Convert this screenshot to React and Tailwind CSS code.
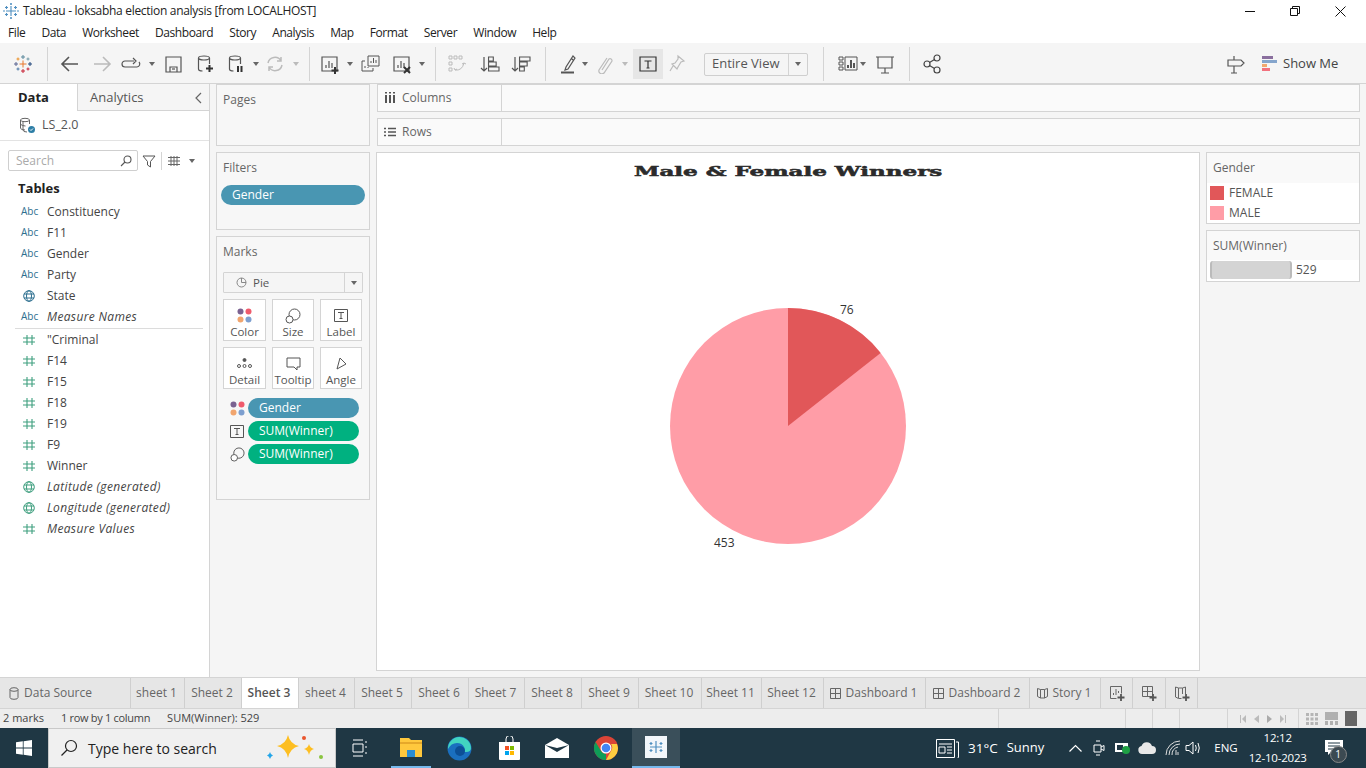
import React from "react";

const menus = ["File", "Data", "Worksheet", "Dashboard", "Story", "Analysis", "Map", "Format", "Server", "Window", "Help"];

const dims = [
  { name: "Constituency", kind: "abc" },
  { name: "F11", kind: "abc" },
  { name: "Gender", kind: "abc" },
  { name: "Party", kind: "abc" },
  { name: "State", kind: "globe" },
  { name: "Measure Names", kind: "abc", italic: true },
];

const measures = [
  { name: '"Criminal', kind: "num" },
  { name: "F14", kind: "num" },
  { name: "F15", kind: "num" },
  { name: "F18", kind: "num" },
  { name: "F19", kind: "num" },
  { name: "F9", kind: "num" },
  { name: "Winner", kind: "num" },
  { name: "Latitude (generated)", kind: "globeGreen", italic: true },
  { name: "Longitude (generated)", kind: "globeGreen", italic: true },
  { name: "Measure Values", kind: "num", italic: true },
];

// widths come from the tab separators in the picture
const tabs = [
  { label: "sheet 1", w: "w-[54px]" },
  { label: "Sheet 2", w: "w-[57px]" },
  { label: "Sheet 3", w: "w-[57px]", active: true },
  { label: "sheet 4", w: "w-[56px]" },
  { label: "Sheet 5", w: "w-[57px]" },
  { label: "Sheet 6", w: "w-[57px]" },
  { label: "Sheet 7", w: "w-[56px]" },
  { label: "Sheet 8", w: "w-[57px]" },
  { label: "Sheet 9", w: "w-[57px]" },
  { label: "Sheet 10", w: "w-[63px]" },
  { label: "Sheet 11", w: "w-[60px]" },
  { label: "Sheet 12", w: "w-[62px]" },
];

function Caret({ className = "", color = "#666" }) {
  return (
    <svg width="6" height="4" viewBox="0 0 6 4" className={"shrink-0 " + className}>
      <path d="M0 0h6L3 4z" fill={color} />
    </svg>
  );
}

function Sep({ className = "" }) {
  return <div className={"w-px h-[34px] bg-[#d4d4d4] shrink-0 " + className} />;
}

function Ico({ children, className = "", stroke = "#555", w = 20, h = 20, sw = 1.2 }) {
  return (
    <svg width={w} height={h} viewBox={`0 0 ${w} ${h}`} fill="none" stroke={stroke} strokeWidth={sw} className={"shrink-0 " + className}>
      {children}
    </svg>
  );
}

function TableauLogo({ className = "" }) {
  const c = (x, y, r, col) => (
    <path d={`M${x - r} ${y}h${2 * r}M${x} ${y - r}v${2 * r}`} stroke={col} strokeWidth="1" />
  );
  return (
    <svg width="20" height="20" viewBox="0 0 20 20" className={"shrink-0 " + className}>
      {c(10, 10, 3.5, "#e8762b")}
      {c(10, 3, 2, "#59879b")}
      {c(10, 17, 2, "#c72035")}
      {c(3, 10, 2, "#5b6591")}
      {c(17, 10, 2, "#1f447a")}
      {c(5, 5, 1.5, "#eb912b")}
      {c(15, 5, 1.5, "#7099a6")}
      {c(5, 15, 1.5, "#4e79a7")}
      {c(15, 15, 1.5, "#c72035")}
    </svg>
  );
}

function Toolbar() {
  return (
    <div className="h-[41px] pt-[2px] bg-[#f5f5f5] flex items-center shrink-0 border-b border-[#d4d4d4]">
      <TableauLogo className="ml-[13px]" />
      <Sep className="ml-[14px]" />
      <Ico className="ml-[12px]" stroke="#555" sw={1.6}><path d="M2 10h16M9 3l-7 7 7 7" /></Ico>
      <Ico className="ml-[12px]" stroke="#bbb" sw={1.6}><path d="M2 10h16M11 3l7 7-7 7" /></Ico>
      <Ico className="ml-[9px]"><path d="M13 7H4a3 3 0 0 0 0 6h12a3 3 0 0 0 2-5M12 4l3 3-3 3" /></Ico>
      <Caret className="ml-[8px]" />
      <Ico className="ml-[8px]"><path d="M3 3h15v15H3zM7 18v-5h7v5" /><path d="M9 15h3" /></Ico>
      <Ico className="ml-[12px]"><ellipse cx="9" cy="4" rx="5.5" ry="2" /><path d="M3.5 4v11q0 2 4 2M14.500 4v6" /><path d="M14.500 11v7M11 14.500h7" stroke="#333" strokeWidth="2" /></Ico>
      <Ico className="ml-[11px]"><ellipse cx="9" cy="4" rx="5.5" ry="2" /><path d="M3.500 4v11q0 2 4 2M14.500 4v6" /><path d="M12 12v6M15.500 12v6" stroke="#333" strokeWidth="2" /></Ico>
      <Caret className="ml-[7px]" />
      <Ico className="ml-[6px]" stroke="#bbb" sw={1.5}><path d="M3 9a7 7 0 0 1 13-2M17 11a7 7 0 0 1-13 2M16 3v4h-4M4 17v-4h4" /></Ico>
      <Caret className="ml-[8px]" color="#bbb" />
      <Sep className="ml-[10px]" />
      <Ico className="ml-[10px]"><path d="M2 3h15v14H2zM6 14v-3M9 14V7M12 14v-5" /><path d="M15 13v7M11.500 16.500h7" stroke="#333" strokeWidth="2" /></Ico>
      <Caret className="ml-[7px]" />
      <Ico className="ml-[8px]" sw={1}><path d="M7 2h11v10H7zM10 9V7M12.500 9V4M15 9V6M4 7H1v10h11v-3" /><path d="M4 14v-2M7 14v-1" /></Ico>
      <Ico className="ml-[11px]"><path d="M2 3h15v14H2zM6 14v-3M9 14V7M12 14v-5" /><path d="M12 13l6 6M18 13l-6 6" stroke="#333" strokeWidth="2" /></Ico>
      <Caret className="ml-[7px]" />
      <Sep className="ml-[10px]" />
      <Ico className="ml-[11px]" stroke="#bbb" sw={1}><path d="M2 2h3v3H2zM7 2h3v3H7zM12 2h3v3h-3zM2 8h3v3H2zM2 14h3v3H2z" /><path d="M8 16q7 1 9-7M7 14l1 2 2-1M15 10l2-1 2 1" /></Ico>
      <Ico className="ml-[13px]"><path d="M4 3v14M1 14l3 3 3-3" /><path d="M9 3h5v4H9zM9 8h8v4H9zM9 13h11v4H9z" transform="translate(0 0) scale(0.95 1)" /></Ico>
      <Ico className="ml-[11px]"><path d="M4 3v14M1 14l3 3 3-3" /><path d="M9 3h11v4H9zM9 8h8v4H9zM9 13h5v4H9z" transform="scale(0.95 1)" /></Ico>
      <Sep className="ml-[14px]" />
      <Ico className="ml-[12px]"><path d="M8 13l-1 3 3-1 7-11-2-2zM13 4l2 2" /><path d="M3 18.500h13" strokeWidth="2" /></Ico>
      <Caret className="ml-[4px]" />
      <Ico className="ml-[7px]" stroke="#bbb"><path d="M7 16l7-11a2 2 0 0 1 3 2l-8 12a3 3 0 0 1-5-3l8-12" /></Ico>
      <Caret className="ml-[7px]" color="#bbb" />
      <div className="ml-[5px] w-[30px] h-[30px] bg-[#e6e6e6] flex items-center justify-center shrink-0">
        <Ico w={18} h={16} stroke="#333"><path d="M1 1h16v14H1zM5.500 5h7M9 5v7M7.500 12h3" /></Ico>
      </div>
      <Ico className="ml-[4px]" stroke="#bbb"><path d="M11 2l6 5-3 1-3 5-1 2-5-5 3-1 3-4zM6 12l-3 5" /></Ico>
      <div className="ml-[17px] w-[104px] h-[23px] border border-[#cfcfcf] rounded-[2px] flex items-center shrink-0 text-[#555]">
        <span className="w-[84px] pl-[7px] text-[13px] border-r border-[#d4d4d4] h-full flex items-center">Entire View</span>
        <span className="flex-1 flex justify-center"><Caret /></span>
      </div>
      <Sep className="ml-[15px]" />
      <Ico className="ml-[14px]" sw={1}><path d="M1 3h4v3H1zM1 8h4v3H1zM1 13h4v3H1zM7 3h12v13H7z" /><path d="M10 14v-3M13 14V6M16 14V9" strokeWidth="2" /></Ico>
      <Caret className="ml-[2px]" />
      <Ico className="ml-[9px]"><path d="M1 3h18M3 3v11h14V3M10 14v5M6 19h8" /></Ico>
      <Sep className="ml-[14px]" />
      <Ico className="ml-[12px]" stroke="#444"><circle cx="5" cy="10" r="3" /><circle cx="15" cy="4" r="3" /><circle cx="15" cy="16" r="3" /><path d="M7.500 8.500l5-3M7.500 11.500l5 3" /></Ico>
      <Ico className="ml-[283px]"><path d="M3 6h13l3 3-3 3H3zM9 2v4M9 12v7M6 19h6" /></Ico>
      <svg width="15" height="16" viewBox="0 0 15 16" className="ml-[17px] shrink-0">
        <path d="M0 0h11v3H0z" fill="#8a6f9e" />
        <path d="M0 4h15v3H0z" fill="#85a5cc" />
        <path d="M0 8h5v3H0z" fill="#f1a86f" />
        <path d="M0 12h8v3H0z" fill="#f2727e" />
      </svg>
      <span className="ml-[6px] text-[13px] text-[#444]">Show Me</span>
    </div>
  );
}

function FieldIcon({ kind }) {
  if (kind === "abc") return <span className="text-[10px] font-medium text-[#2d6f8f] w-[18px]">Abc</span>;
  if (kind === "num") {
    return (
      <Ico w={18} h={12} stroke="#3f9f7f" sw={1.1}><path d="M6 1v10M11 1v10M2 4h12M2 8h12" /></Ico>
    );
  }
  const col = kind === "globe" ? "#2d6f8f" : "#3f9f7f";
  return (
    <Ico w={18} h={12} stroke={col} sw={1}>
      <circle cx="8" cy="6" r="5.300" />
      <ellipse cx="8" cy="6" rx="2.500" ry="5.300" />
      <path d="M3 4h10M3 8h10" />
    </Ico>
  );
}

function Field({ f }) {
  return (
    <div className="h-[21px] flex items-center pl-[21px] gap-[8px]">
      <span className="w-[18px] flex items-center shrink-0"><FieldIcon kind={f.kind} /></span>
      <span className={"text-[12px] text-[#444] " + (f.italic ? "italic tracking-[0.35px]" : "")}>{f.name}</span>
    </div>
  );
}

function DataPane() {
  return (
    <div className="w-[210px] shrink-0 bg-white border-r border-[#d4d4d4] flex flex-col">
      <div className="flex h-[27px] shrink-0">
        <div className="w-[77px] flex items-center pl-[18px] font-bold text-[13px] text-[#222]">Data</div>
        <div className="flex-1 bg-[#f5f5f5] border-l border-b border-[#d4d4d4] flex items-center pt-[1px] pl-[12px] pr-[6px] justify-between text-[13px] text-[#555]">
          <span>Analytics</span>
          <Ico w={8} h={12} stroke="#666"><path d="M6 1L1 6l5 5" /></Ico>
        </div>
      </div>
      <div className="h-[30px] shrink-0 border-b border-[#e3e3e3] flex items-center pl-[19px] gap-[6px]">
        <svg width="17" height="17" viewBox="0 0 17 17" fill="none" stroke="#666" className="shrink-0">
          <ellipse cx="6" cy="3" rx="4.500" ry="1.700" />
          <path d="M1.500 3v8q0 2 4.500 2M10.500 3v4M1.500 7q1 2 5 2M4 5v8q0 2 4 2" />
          <circle cx="12.500" cy="12.500" r="3.500" fill="#2d7ea6" stroke="none" />
          <path d="M11 12.500l1 1 2-2" stroke="#fff" />
        </svg>
        <span className="text-[12.500px] text-[#555]">LS_2.0</span>
      </div>
      <div className="flex items-center h-[21px] mt-[9px] ml-[8px] shrink-0">
        <div className="w-[130px] h-[21px] border border-[#cfcfcf] rounded-[2px] flex items-center justify-between pl-[7px] pr-[5px]">
          <span className="text-[12px] text-[#aaa]">Search</span>
          <Ico w={12} h={12} stroke="#555" sw={1.1}><circle cx="7.500" cy="4.500" r="3.500" /><path d="M5 7l-4 4" /></Ico>
        </div>
        <Ico className="ml-[4px]" w={14} h={14} stroke="#555" sw={1}><path d="M1 2h12L8.500 7.500V13L5.500 11V7.500z" /></Ico>
        <div className="w-px h-[18px] bg-[#d4d4d4] ml-[5px]" />
        <Ico className="ml-[6px]" w={12} h={10} stroke="#666" sw={1}><path d="M0 1.500h12M0 5h12M0 8.500h12M3 0v10M6 0v10M9 0v10" /></Ico>
        <Caret className="ml-[9px]" />
      </div>
      <div className="ml-[18px] mt-[8px] mb-[2px] h-[20px] flex items-center font-bold text-[13px] text-[#222]">Tables</div>
      {dims.map((f) => <Field key={f.name} f={f} />)}
      <div className="h-px bg-[#dcdcdc] ml-[15px] mr-[6px] mt-[1px]" />
      {measures.map((f) => <Field key={f.name} f={f} />)}
    </div>
  );
}

function Card({ title, className = "", children }) {
  return (
    <div className={"border border-[#d4d4d4] bg-[#f7f7f7] " + className}>
      <div className="pl-[6px] pt-[7px] text-[12px] text-[#666] leading-[16px]">{title}</div>
      {children}
    </div>
  );
}

function Pill({ color, children, className = "" }) {
  return (
    <div className={"h-[20px] rounded-full flex items-center pl-[11px] text-[12px] text-white " + color + " " + className}>{children}</div>
  );
}

function Dots() {
  return (
    <svg width="15" height="15" viewBox="0 0 15 15" className="shrink-0">
      <circle cx="3.500" cy="3.500" r="3" fill="#7b6291" />
      <circle cx="11.500" cy="3.500" r="3" fill="#ef5b6c" />
      <circle cx="3.500" cy="11.500" r="3" fill="#f1a56e" />
      <circle cx="11.500" cy="11.500" r="3" fill="#7d9fcf" />
    </svg>
  );
}

function SizeIcon({ s = 16 }) {
  return (
    <svg width={s} height={s} viewBox="0 0 16 16" fill="none" stroke="#555" className="shrink-0">
      <circle cx="9.500" cy="6.500" r="5.500" />
      <circle cx="4.500" cy="11.500" r="3.500" fill="#fff" />
    </svg>
  );
}

function TBox({ w = 14, h = 13 }) {
  return (
    <Ico w={w} h={h} stroke="#555" sw={1}><path d={`M.5.5h${w - 1}v${h - 1}h-${w - 1}zM4 3.500h6M7 3.500v6M5.500 9.500h3`} /></Ico>
  );
}

function MarkBtn({ label, w, children }) {
  return (
    <div className={"h-[42px] border border-[#d4d4d4] bg-white flex flex-col items-center pt-[7px] shrink-0 " + w}>
      <div className="h-[17px] flex items-center">{children}</div>
      <span className="text-[11.500px] text-[#555] mt-[1px] leading-[14px]">{label}</span>
    </div>
  );
}

function CardsPane() {
  return (
    <div className="w-[154px] ml-[6px] flex flex-col gap-[6px] shrink-0">
      <Card title="Pages" className="h-[62px]" />
      <Card title="Filters" className="h-[78px]">
        <Pill color="bg-[#4996b2]" className="mx-[4px] mt-[9px]">Gender</Pill>
      </Card>
      <Card title="Marks" className="h-[264px]">
        <div className="mx-[6px] mt-[12px] h-[21px] border border-[#d4d4d4] bg-[#f5f5f5] flex items-center rounded-[1px]">
          <div className="w-[121px] h-full flex items-center pl-[12px] gap-[6px] border-r border-[#d4d4d4]">
            <Ico w={11} h={11} stroke="#888" sw={1}><circle cx="5.500" cy="5.500" r="4.500" /><path d="M5.500 1v4.500H10" /></Ico>
            <span className="text-[11.500px] text-[#555]">Pie</span>
          </div>
          <div className="flex-1 flex justify-center"><Caret /></div>
        </div>
        <div className="mx-[6px] mt-[6px] flex gap-[6px]">
          <MarkBtn label="Color" w="w-[43px]"><Dots /></MarkBtn>
          <MarkBtn label="Size" w="w-[42px]"><SizeIcon /></MarkBtn>
          <MarkBtn label="Label" w="w-[42px]"><TBox /></MarkBtn>
        </div>
        <div className="mx-[6px] mt-[6px] flex gap-[6px]">
          <MarkBtn label="Detail" w="w-[43px]">
            <svg width="15" height="13" viewBox="0 0 15 13" fill="none" stroke="#555" className="shrink-0">
              <circle cx="7.500" cy="3" r="1.500" fill="#555" />
              <circle cx="2" cy="9" r="1.500" /><circle cx="7.500" cy="9" r="1.500" /><circle cx="13" cy="9" r="1.500" />
            </svg>
          </MarkBtn>
          <MarkBtn label="Tooltip" w="w-[42px]">
            <Ico w={15} h={14} stroke="#555" sw={1}><path d="M1 1h13v9h-3v3l-3-3H1z" /></Ico>
          </MarkBtn>
          <MarkBtn label="Angle" w="w-[42px]">
            <Ico w={12} h={14} stroke="#555" sw={1}><path d="M5 1l6 6-9 5z" /></Ico>
          </MarkBtn>
        </div>
        <div className="mt-[9px] flex flex-col gap-[3px] pl-[13px]">
          <div className="flex items-center gap-[3px]">
            <Dots />
            <Pill color="bg-[#4996b2]" className="w-[111px]">Gender</Pill>
          </div>
          <div className="flex items-center gap-[3px]">
            <span className="w-[15px] flex"><TBox w={14} h={13} /></span>
            <Pill color="bg-[#00b180]" className="w-[111px]">SUM(Winner)</Pill>
          </div>
          <div className="flex items-center gap-[3px]">
            <SizeIcon s={15} />
            <Pill color="bg-[#00b180]" className="w-[111px]">SUM(Winner)</Pill>
          </div>
        </div>
      </Card>
    </div>
  );
}

function Shelf({ label, icon }) {
  return (
    <div className="h-[28px] border border-[#d4d4d4] bg-[#fafafa] flex items-center">
      <div className="w-[124px] h-full border-r border-[#d4d4d4] flex items-center pl-[6px] gap-[6px] shrink-0 text-[12px] text-[#666]">
        {icon}
        <span>{label}</span>
      </div>
    </div>
  );
}

function PieChart() {
  return (
    <svg width="270" height="270" viewBox="0 0 270 270" className="shrink-0">
      <circle cx="135" cy="135" r="118" fill="#ff9da7" />
      <path d="M135 135V17A118 118 0 0 1 227.600 61.900z" fill="#e15759" />
    </svg>
  );
}

function ViewPane() {
  return (
    <div className="w-[824px] h-[519px] ml-[-1px] border border-[#d4d4d4] bg-white flex flex-col items-center shrink-0">
      <div className="mt-[10px] h-[18px] flex items-center scale-x-[1.77] font-['DejaVu_Serif',serif] font-bold text-[13px] text-[#2b2b2b] [-webkit-text-stroke:0.5px_#2b2b2b]">
        Male &amp; Female Winners
      </div>
      <div className="relative mt-[110px]">
        <PieChart />
        <span className="absolute left-[187px] top-[10px] text-[12px] text-[#333]">76</span>
        <span className="absolute left-[61px] top-[243px] text-[12px] text-[#333]">453</span>
      </div>
    </div>
  );
}

function Legends() {
  return (
    <div className="w-[154px] ml-[6px] flex flex-col gap-[6px] shrink-0">
      <div className="border border-[#d4d4d4] h-[72px] bg-white">
        <div className="h-[30px] bg-[#f9f9f9] pl-[6px] flex items-center text-[12px] text-[#666]">Gender</div>
        <div className="flex items-center h-[20px] pl-[3px] gap-[5px] text-[12px] text-[#555]">
          <span className="w-[14px] h-[14px] bg-[#e15759]" />FEMALE
        </div>
        <div className="flex items-center h-[20px] pl-[3px] gap-[5px] text-[12px] text-[#555]">
          <span className="w-[14px] h-[14px] bg-[#ff9da7]" />MALE
        </div>
      </div>
      <div className="border border-[#d4d4d4] h-[52px] bg-white">
        <div className="h-[29px] bg-[#f9f9f9] pl-[6px] flex items-center text-[12px] text-[#666]">SUM(Winner)</div>
        <div className="flex items-center h-[20px] pl-[3px] gap-[4px] text-[12px] text-[#555]">
          <span className="w-[82px] h-[18px] bg-[#d4d4d4] border-x-2 border-[#bbb] rounded-[3px]" />529
        </div>
      </div>
    </div>
  );
}

function MainArea() {
  return (
    <div className="flex-1 flex bg-[#f5f5f5] min-h-0">
      <DataPane />
      <CardsPane />
      <div className="ml-[7px] flex flex-col gap-[6px] w-[983px] shrink-0">
        <Shelf
          label="Columns"
          icon={<Ico w={12} h={12} stroke="#555" sw={2}><path d="M2 3v8M6 3v8M10 3v8" /><path d="M2 0v1.500M6 0v1.500M10 0v1.500" /></Ico>}
        />
        <Shelf
          label="Rows"
          icon={<Ico w={12} h={12} stroke="#555" sw={1.500}><path d="M4 2.500h8M4 6h8M4 9.500h8M0 2.500h2M0 6h2M0 9.500h2" /></Ico>}
        />
        <div className="flex">
          <ViewPane />
          <Legends />
        </div>
      </div>
    </div>
  );
}

function Tab({ w, active, children }) {
  return (
    <div className={"h-full pr-[2px] border-r border-[#cfcfcf] flex items-center justify-center text-[12px] shrink-0 gap-[5px] " + w + (active ? " bg-white font-semibold text-[#555]" : " text-[#666]")}>
      {children}
    </div>
  );
}

function DashIcon() {
  return <Ico w={11} h={11} stroke="#666" sw={1}><path d="M.5.5h10v10H.500zM.5 5.500h10M5.500 .5v10" /></Ico>;
}

function StoryIcon() {
  return <Ico w={11} h={12} stroke="#666" sw={1}><path d="M.5 1.500l3 1h4l3-1v8l-3 1.500h-4l-3-1.500zM3.500 2.500V11M7.500 2.500V11" /></Ico>;
}

function NewTab({ w, children }) {
  return (
    <div className={"h-full border-r border-[#cfcfcf] flex items-center justify-center shrink-0 " + w}>
      <svg width="16" height="16" viewBox="0 0 16 16" fill="none" stroke="#666" strokeWidth="1">{children}<path d="M12 9v7M8.500 12.500h7" stroke="#555" strokeWidth="1.800" /></svg>
    </div>
  );
}

function TabBar() {
  return (
    <div className="h-[31px] bg-[#e6e6e6] border-t border-[#d4d4d4] flex shrink-0 items-center">
      <div className="w-[131px] h-full border-r border-[#cfcfcf] flex items-center pl-[9px] gap-[5px] text-[12px] text-[#666] shrink-0">
        <Ico w={10} h={13} stroke="#666" sw={1}><ellipse cx="5" cy="2.500" rx="4" ry="1.800" /><path d="M1 2.500v8q0 1.800 4 1.800t4-1.800v-8" /></Ico>
        Data Source
      </div>
      {tabs.map((t) => (
        <Tab key={t.label} w={t.w} active={t.active}>{t.label}</Tab>
      ))}
      <Tab w="w-[102px]"><DashIcon />Dashboard 1</Tab>
      <Tab w="w-[104px]"><DashIcon />Dashboard 2</Tab>
      <Tab w="w-[71px]"><StoryIcon />Story 1</Tab>
      <NewTab w="w-[32px]"><path d="M1.500 1.500h11v7M1.500 1.500v12h6M4.500 10V8M7 10V4M9.500 8V6" /></NewTab>
      <NewTab w="w-[33px]"><path d="M1.500 1.500h10v10h-10zM1.500 6.500h10M6.500 1.500v10" /></NewTab>
      <NewTab w="w-[32px]"><path d="M1.500 2l3 1h4l3-1v7M1.500 2v10l3 1.500h3M4.500 3v10M8.500 3v6" /></NewTab>
    </div>
  );
}

function StatusBar() {
  return (
    <div className="h-[20px] bg-[#ededed] border-t border-[#d4d4d4] flex items-center text-[11px] text-[#444] shrink-0">
      <span className="ml-[3px]">2 marks</span>
      <span className="ml-[17px] tracking-[-0.3px]">1 row by 1 column</span>
      <span className="ml-[17px]">SUM(Winner): 529</span>
      <div className="ml-auto flex h-full items-center">
        <div className="w-[127px] h-full border-l border-[#d4d4d4]" />
        <div className="w-[27px] h-full border-l border-[#d4d4d4]" />
        <div className="w-[27px] h-full border-l border-[#d4d4d4]" />
        <div className="w-[48px] h-full border-l border-[#d4d4d4]" />
        <div className="w-[71px] h-full border-l border-[#d4d4d4] flex items-center justify-center gap-[8px]">
          <svg width="6" height="8" viewBox="0 0 6 8" fill="#bbb"><path d="M0 0h1v8H0zM6 0v8L2 4z" /></svg>
          <svg width="5" height="8" viewBox="0 0 5 8" fill="#bbb"><path d="M5 0v8L0 4z" /></svg>
          <svg width="5" height="8" viewBox="0 0 5 8" fill="#aaa"><path d="M0 0v8l5-4z" /></svg>
          <svg width="6" height="8" viewBox="0 0 6 8" fill="#bbb"><path d="M5 0h1v8H5zM0 0v8l4-4z" /></svg>
        </div>
        <div className="w-[68px] h-full border-l border-[#d4d4d4] flex items-center pl-[7px] gap-[7px]">
          <svg width="12" height="12" viewBox="0 0 12 12" fill="#b5b5b5"><path d="M0 0h3v3H0zM4.500 0h3v3h-3zM9 0h3v3H9zM0 4.500h3v3H0zM4.500 4.500h3v3h-3zM9 4.500h3v3H9zM0 9h3v3H0zM4.500 9h3v3h-3zM9 9h3v3H9z" /></svg>
          <svg width="13" height="13" viewBox="0 0 13 13" fill="#b0b0b0"><path d="M0 0h13v8H0zM0 9h3v4H0zM5 9h3v4H5zM10 9h3v4h-3z" /></svg>
          <span className="w-[12px] h-[15px] bg-[#666]" />
        </div>
      </div>
    </div>
  );
}

function Taskbar() {
  return (
    <div className="h-[40px] bg-[#1f3744] flex items-center shrink-0 text-white">
      <div className="w-[48px] flex justify-center shrink-0">
        <svg width="16" height="16" viewBox="0 0 16 16" fill="#fff"><path d="M0 2.300l6.800-1v6.300H0zM7.600 1.200L16 0v7.600H7.600zM0 8.400h6.800v6.300l-6.800-1zM7.600 8.400H16V16l-8.400-1.200z" /></svg>
      </div>
      <div className="w-[288px] h-[40px] bg-[#f0f0f0] border border-[#c9c9c9] flex items-center pl-[11px] shrink-0">
        <svg width="18" height="18" viewBox="0 0 18 18" fill="none" stroke="#222" strokeWidth="1.200" className="shrink-0"><circle cx="11" cy="7" r="5.500" /><path d="M7 11l-5.500 5.500" /></svg>
        <span className="ml-[10px] text-[14px] text-[#222]">Type here to search</span>
        <svg width="64" height="30" viewBox="0 0 64 30" className="ml-[47px] shrink-0">
          <path d="M24 2q2 9 11 11q-9 2-11 12q-2-10-11-12q9-2 11-11z" fill="#fdbe21" />
          <path d="M45 11q1 4 5 5q-4 1-5 6q-1-5-5-6q4-1 5-5z" fill="#fdbe21" />
          <path d="M6 19q.7 3 3 3.500q-2.300.5-3 3.500q-.7-3-3-3.500q2.300-.5 3-3.500z" fill="#23a5e8" />
          <circle cx="40" cy="5" r="2" fill="#e9552e" /><circle cx="57" cy="24" r="2" fill="#8ac440" />
        </svg>
      </div>
      <svg width="16" height="18" viewBox="0 0 16 18" fill="none" stroke="#fff" className="ml-[16px] shrink-0"><path d="M1 1h10M1 17h10M1 5h10v8H1zM14 2v2M14 7v2M14 13v2" /></svg>
      <div className="ml-[23px] w-[40px] h-[40px] border-b-2 border-[#76b9ed] flex items-center justify-center shrink-0">
        <svg width="22" height="20" viewBox="0 0 22 20"><path d="M0 1h9l2 2h11v17H0z" fill="#ffc83d" /><path d="M0 5h22v2H0z" fill="#e6a82a" /><path d="M7 13h8v7H7z" fill="#2a8dd3" /></svg>
      </div>
      <div className="ml-[16px] shrink-0">
        <svg width="25" height="25" viewBox="0 0 25 25"><circle cx="12.500" cy="12.500" r="12" fill="#1a6fbf" /><path d="M1 13a11.500 11.500 0 0 1 23-1q0 4-5 4h-3q3-2 1-5-2-4-7-4-6 0-9 6z" fill="#42d4c0" /><circle cx="13" cy="15" r="5" fill="#0c4f96" /></svg>
      </div>
      <div className="ml-[27px] shrink-0">
        <svg width="21" height="24" viewBox="0 0 21 24" fill="none"><path d="M7 7V3a3.500 3.500 0 0 1 7 0v4" stroke="#fff" /><path d="M0 6h21v17a1 1 0 0 1-1 1H1a1 1 0 0 1-1-1z" fill="#fff" /><path d="M6 10h4v4H6z" fill="#f25022" /><path d="M11 10h4v4h-4z" fill="#7fba00" /><path d="M6 15h4v4H6z" fill="#00a4ef" /><path d="M11 15h4v4h-4z" fill="#ffb900" /></svg>
      </div>
      <div className="ml-[25px] shrink-0">
        <svg width="24" height="20" viewBox="0 0 24 20"><path d="M0 7l12-7 12 7v13H0z" fill="#fff" /><path d="M0 7l12 7 12-7-12 3z" fill="#1f3744" /></svg>
      </div>
      <div className="ml-[25px] shrink-0">
        <svg width="24" height="24" viewBox="0 0 24 24"><circle cx="12" cy="12" r="12" fill="#db4437" /><path d="M12 24A12 12 0 0 1 1.600 6L7 15a6 6 0 0 0 5 3z" fill="#0f9d58" /><path d="M24 12a12 12 0 0 1-12 12l5-9a6 6 0 0 0 0-7h6z" fill="#ffcd40" /><circle cx="12" cy="12" r="5.500" fill="#fff" /><circle cx="12" cy="12" r="4.300" fill="#4285f4" /></svg>
      </div>
      <div className="ml-[14px] w-[48px] h-[40px] bg-[#3a4f5a] border-b-2 border-[#76b9ed] flex items-center justify-center shrink-0">
        <div className="w-[22px] h-[22px] bg-[#f2f6fa] flex items-center justify-center">
          <svg width="18" height="18" viewBox="0 0 18 18" stroke="#4f8fc0" strokeWidth="1.200"><path d="M9 3v12M3 9h12M4 4v3M2.500 5.500h3M14 4v3M12.500 5.500h3M4 11v3M2.500 12.500h3M14 11v3M12.500 12.500h3" /></svg>
        </div>
      </div>
      <svg width="23" height="19" viewBox="0 0 23 19" fill="none" stroke="#fff" className="ml-[256px] shrink-0"><path d="M.5 .5h18v18H.500zM20 3h2.500v15a1 1 0 0 1-1 1" /><path d="M3 5h13M3 8h6v6H3zM11 8h5M11 11h5M11 14h5" /></svg>
      <span className="ml-[9px] text-[13.500px]">31°C</span>
      <span className="ml-[9px] text-[13px]">Sunny</span>
      <svg width="13" height="8" viewBox="0 0 13 8" fill="none" stroke="#fff" strokeWidth="1.200" className="ml-[25px] shrink-0"><path d="M.5 7.500l6-6 6 6" /></svg>
      <svg width="12" height="18" viewBox="0 0 12 18" fill="none" stroke="#fff" className="ml-[11px] shrink-0"><path d="M1 6h7v7H1zM8 8l3-1.500v5L8 10M3 2h4M3 16h4" /></svg>
      <svg width="16" height="14" viewBox="0 0 16 14" className="ml-[10px] shrink-0"><path d="M0 2h13v9H0z" fill="#fff" /><path d="M2 4h6v5H2z" fill="#1f3744" /><circle cx="11" cy="9" r="4" fill="#1fa045" /></svg>
      <svg width="18" height="12" viewBox="0 0 18 12" fill="#e8e8e8" className="ml-[7px] shrink-0"><path d="M4 12a4 4 0 0 1-.5-7.900A5.500 5.500 0 0 1 14 4a4 4 0 0 1 0 8z" /></svg>
      <svg width="16" height="16" viewBox="0 0 16 16" fill="none" stroke="#ddd" className="ml-[9px] shrink-0"><path d="M1 15A14 14 0 0 1 15 1M4 15A11 11 0 0 1 15 4M7 15a8 8 0 0 1 6-8" /><path d="M11 10v5M13 12v3" /></svg>
      <svg width="16" height="16" viewBox="0 0 16 16" fill="none" stroke="#fff" className="ml-[4px] shrink-0"><path d="M1 5.500h3L8 2v12l-4-3.500H1zM10.500 5q1.500 3 0 6M13 3q2.500 5 0 10" /></svg>
      <span className="ml-[13px] text-[11.500px]">ENG</span>
      <div className="ml-[9px] flex flex-col items-center w-[62px] text-[11.500px] leading-[20px] shrink-0 whitespace-nowrap tracking-[-0.2px]">
        <span>12:12</span>
        <span>12-10-2023</span>
      </div>
      <div className="relative ml-[16px] shrink-0">
        <svg width="18" height="16" viewBox="0 0 18 16" fill="#fff"><path d="M0 0h18v12H6l-3 3v-3H0z" /><path d="M3 3h12M3 6h12M3 9h8" stroke="#1f3744" /></svg>
        <span className="absolute left-[5px] top-[6px] w-[17px] h-[17px] rounded-full bg-[#3c4a52] border border-[#888] text-[10px] flex items-center justify-center">1</span>
      </div>
    </div>
  );
}

export default function App() {
  return (
    <div className="w-[1366px] h-[768px] overflow-hidden flex flex-col bg-white font-['Open_Sans',sans-serif]">
      <div className="h-[22px] flex items-center shrink-0">
        <svg width="16" height="16" viewBox="0 0 16 16" stroke="#4f8fc0" strokeWidth="1.100" className="ml-[3px] shrink-0">
          <path d="M8 3v10M3 8h10M3.500 3v3M2 4.500h3M12.500 3v3M11 4.500h3M3.500 10v3M2 11.500h3M12.500 10v3M11 11.500h3M8 0v2M7 1h2M8 14v2M7 15h2M0 8h2M14 8h2" />
        </svg>
        <span className="ml-[4px] text-[12px] text-[#222] tracking-[-0.3px]">Tableau - loksabha election analysis [from LOCALHOST]</span>
        <div className="ml-auto flex items-center shrink-0">
          <svg width="10" height="10" viewBox="0 0 10 10" stroke="#111" className="mr-[35px]"><path d="M0 5.500h10" /></svg>
          <svg width="10" height="10" viewBox="0 0 10 10" fill="none" stroke="#111" className="mr-[35px]"><path d="M.5 2.500h7v7h-7zM2.500 2.500v-2h7v7h-2" /></svg>
          <svg width="11" height="11" viewBox="0 0 11 11" stroke="#111" className="mr-[20px]"><path d="M.5 .5l10 10M10.500 .5l-10 10" /></svg>
        </div>
      </div>
      <div className="h-[21px] flex items-center pl-[8px] gap-[16px] text-[12px] text-[#222] shrink-0 tracking-[-0.4px]">
        {menus.map((m) => <span key={m}>{m}</span>)}
      </div>
      <Toolbar />
      <MainArea />
      <TabBar />
      <StatusBar />
      <Taskbar />
    </div>
  );
}
